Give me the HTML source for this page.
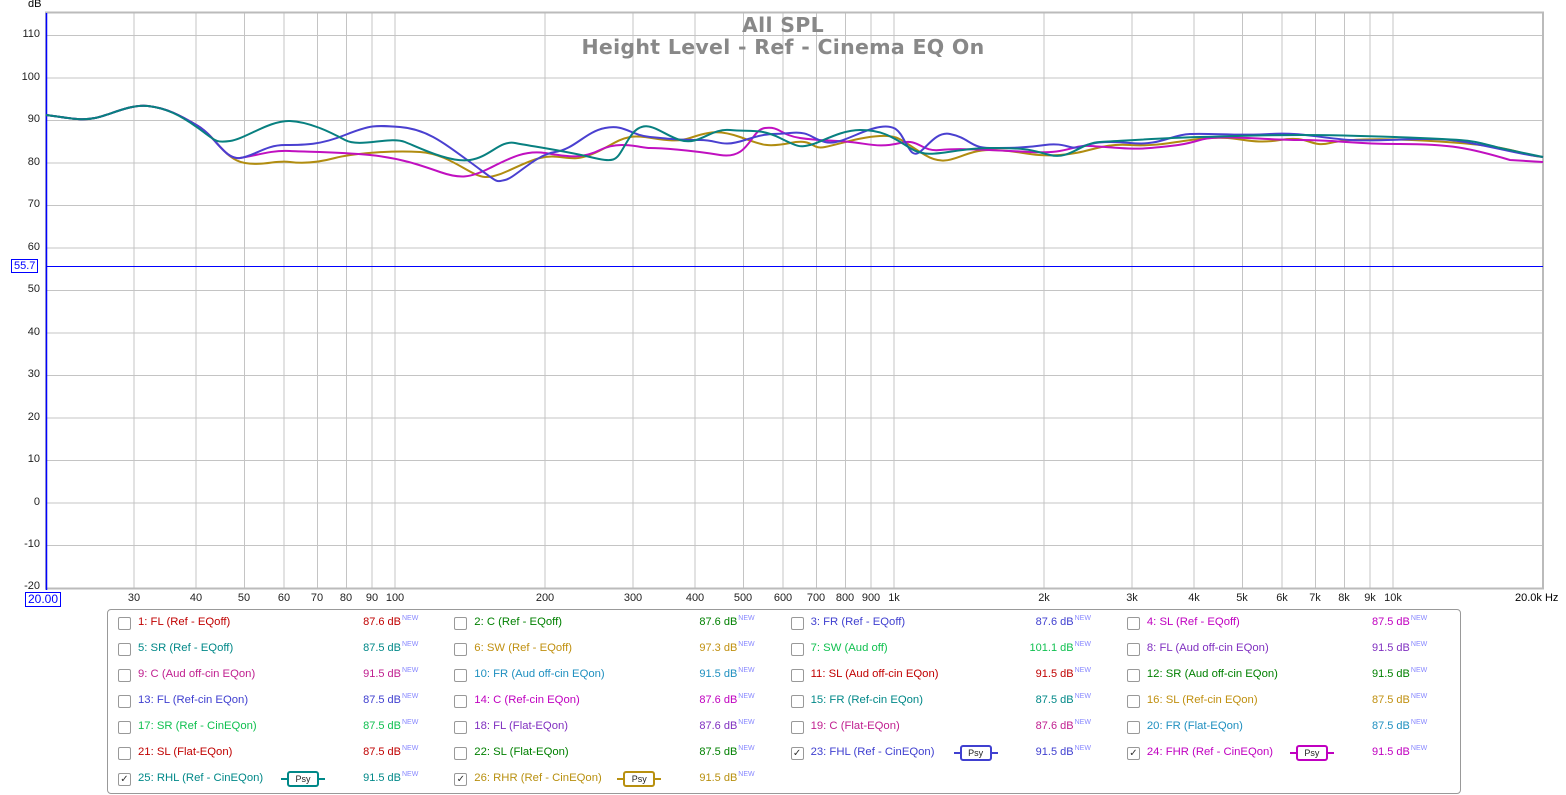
<!DOCTYPE html>
<html><head><meta charset="utf-8"><style>
body{margin:0;width:1566px;height:795px;background:#fff;font-family:"Liberation Sans",sans-serif;position:relative;overflow:hidden}
.a{position:absolute;white-space:nowrap}
.yl{font-size:11px;color:#222;text-align:right;width:40px;left:0}
.xl{font-size:11px;color:#222;transform:translateX(-50%)}
.cb{position:absolute;width:11px;height:11px;border:1px solid #999;border-radius:2px;background:#fff;font-size:10px;line-height:11px;text-align:center;color:#333}
.lb{font-size:11.3px}
.v{font-size:11px;text-align:right;width:56px}
.psy{position:absolute;font-size:9px;color:#222;border:2px solid;border-radius:3px;width:28px;height:12px;line-height:12px;text-align:center}
.psy:before,.psy:after{content:"";position:absolute;top:5px;width:6px;height:2px;background:currentColor}
.psy:before{left:-8px}.psy:after{right:-8px}
</style></head><body>
<svg class="a" style="left:0;top:0" width="1566" height="610">
<g stroke="#c4c4c4" stroke-width="1">
<line x1="46" y1="35.5" x2="1543" y2="35.5"/><line x1="46" y1="78" x2="1543" y2="78"/><line x1="46" y1="120.5" x2="1543" y2="120.5"/><line x1="46" y1="163" x2="1543" y2="163"/><line x1="46" y1="205.5" x2="1543" y2="205.5"/><line x1="46" y1="248" x2="1543" y2="248"/><line x1="46" y1="290.5" x2="1543" y2="290.5"/><line x1="46" y1="333" x2="1543" y2="333"/><line x1="46" y1="375.5" x2="1543" y2="375.5"/><line x1="46" y1="418" x2="1543" y2="418"/><line x1="46" y1="460.5" x2="1543" y2="460.5"/><line x1="46" y1="503" x2="1543" y2="503"/><line x1="46" y1="545.5" x2="1543" y2="545.5"/>
<path d="M134 13V588M196 13V588M244.5 13V588M284 13V588M317.5 13V588M346.5 13V588M372 13V588M395 13V588M545 13V588M633 13V588M695 13V588M743.5 13V588M783 13V588M816.5 13V588M845.5 13V588M871 13V588M894 13V588M1044 13V588M1132 13V588M1194 13V588M1242.5 13V588M1282 13V588M1315.5 13V588M1344.5 13V588M1370 13V588M1393 13V588"/>
</g>
<rect x="46" y="12.5" width="1497" height="576" fill="none" stroke="#bbb" stroke-width="2"/>
<line x1="46.5" y1="13" x2="46.5" y2="590" stroke="#00f" stroke-width="1.5"/>
<line x1="46" y1="266.5" x2="1543" y2="266.5" stroke="#00f" stroke-width="1"/>
<g fill="none" stroke-width="2">
<path stroke="#b08c10" d="M46,115 C70,118 80,121 95,118 S130,104 148,106 S180,115 198,126 S225,160 245,163 S275,160 290,162 S320,162 335,158 S390,150 420,152 S470,176 485,177 S520,163 540,158 S570,163 590,155 S615,140 630,137 S670,145 690,138 S720,130 740,137 S765,148 790,143 S810,150 825,147 S860,137 880,136 S900,140 925,155 S960,150 990,150 S1030,157 1060,155 S1100,143 1130,145 S1180,140 1210,138 S1250,145 1280,140 S1310,148 1330,143 S1400,138 1460,143 S1520,155 1543,157"/>
<path stroke="#c010c0" d="M46,115 C70,118 80,121 95,118 S130,104 148,106 S180,115 198,126 S225,160 240,158 S270,150 290,151 S340,152 370,155 S420,165 440,172 S470,178 490,168 S525,150 545,153 S580,160 600,150 S640,148 650,148 S690,150 720,155 S750,130 765,128 S780,135 800,138 S830,140 850,142 S880,148 900,143 S920,152 940,150 S990,150 1030,152 S1070,145 1090,146 S1130,150 1150,148 S1180,146 1200,140 S1260,140 1300,140 S1350,144 1400,144 S1470,148 1510,160 L1543,162"/>
<path stroke="#4a40d0" d="M46,115 C70,118 80,121 95,118 S130,104 148,106 S180,115 198,126 S225,160 240,158 S265,145 285,145 S320,145 345,135 S375,125 400,127 S440,140 470,162 S495,182 505,180 S535,155 555,152 S585,132 605,128 S630,135 650,137 S680,140 700,140 S720,148 745,140 S770,135 790,133 S810,138 825,142 S860,130 880,127 S900,135 910,150 S930,130 950,134 S970,148 990,148 S1025,148 1045,145 S1070,150 1080,147 S1100,140 1130,143 S1170,135 1190,134 S1240,136 1270,134 S1320,138 1350,140 S1420,137 1450,140 S1520,155 1543,157"/>
<path stroke="#088080" d="M46,115 C70,118 80,121 95,118 S130,104 148,106 S180,115 198,128 S215,143 230,141 S270,120 290,121 S330,132 345,140 S390,136 405,142 S450,163 470,160 S500,140 515,143 S560,150 590,157 S615,160 630,137 S660,134 680,140 S710,128 730,130 S760,128 780,138 S800,147 810,145 S840,130 860,130 S890,135 910,148 S950,148 990,148 S1030,150 1050,155 S1080,143 1100,142 S1160,138 1200,137 S1260,135 1300,135 S1370,136 1420,138 S1470,140 1500,148 L1543,157"/>
</g>
</svg>
<div class="a" style="left:0;top:14px;width:1566px;text-align:center;color:#888;font-size:20.5px;font-family:'DejaVu Sans',sans-serif;font-weight:bold;line-height:22px;letter-spacing:0.3px">All SPL<br>Height Level - Ref - Cinema EQ On</div>
<div class="a" style="left:28px;top:-2px;font-size:11px">dB</div>
<div class="a yl" style="top:28px">110</div><div class="a yl" style="top:71px">100</div><div class="a yl" style="top:113px">90</div><div class="a yl" style="top:156px">80</div><div class="a yl" style="top:198px">70</div><div class="a yl" style="top:241px">60</div><div class="a yl" style="top:283px">50</div><div class="a yl" style="top:326px">40</div><div class="a yl" style="top:368px">30</div><div class="a yl" style="top:411px">20</div><div class="a yl" style="top:453px">10</div><div class="a yl" style="top:496px">0</div><div class="a yl" style="top:538px">-10</div><div class="a yl" style="top:580px">-20</div>
<div class="a" style="left:11px;top:259px;border:1px solid #00f;color:#00f;font-size:11px;padding:0 2px;background:#fff">55.7</div>
<div class="a" style="left:25px;top:592px;border:1px solid #00f;color:#00f;font-size:12px;padding:0 2px;line-height:13px">20.00</div>
<div class="a xl" style="left:134px;top:592px">30</div><div class="a xl" style="left:196px;top:592px">40</div><div class="a xl" style="left:244px;top:592px">50</div><div class="a xl" style="left:284px;top:592px">60</div><div class="a xl" style="left:317px;top:592px">70</div><div class="a xl" style="left:346px;top:592px">80</div><div class="a xl" style="left:372px;top:592px">90</div><div class="a xl" style="left:395px;top:592px">100</div><div class="a xl" style="left:545px;top:592px">200</div><div class="a xl" style="left:633px;top:592px">300</div><div class="a xl" style="left:695px;top:592px">400</div><div class="a xl" style="left:743px;top:592px">500</div><div class="a xl" style="left:783px;top:592px">600</div><div class="a xl" style="left:816px;top:592px">700</div><div class="a xl" style="left:845px;top:592px">800</div><div class="a xl" style="left:871px;top:592px">900</div><div class="a xl" style="left:894px;top:592px">1k</div><div class="a xl" style="left:1044px;top:592px">2k</div><div class="a xl" style="left:1132px;top:592px">3k</div><div class="a xl" style="left:1194px;top:592px">4k</div><div class="a xl" style="left:1242px;top:592px">5k</div><div class="a xl" style="left:1282px;top:592px">6k</div><div class="a xl" style="left:1315px;top:592px">7k</div><div class="a xl" style="left:1344px;top:592px">8k</div><div class="a xl" style="left:1370px;top:592px">9k</div><div class="a xl" style="left:1393px;top:592px">10k</div>
<div class="a" style="left:1515px;top:592px;font-size:11px">20.0k Hz</div>
<div class="a" style="left:107px;top:609px;width:1352px;height:183px;border:1px solid #999;border-radius:4px"></div>
<div id="L"></div>
<script>
var d=[["1: FL (Ref - EQoff)","87.6","#c00000"],["2: C (Ref - EQoff)","87.6","#008000"],["3: FR (Ref - EQoff)","87.6","#4040d0"],["4: SL (Ref - EQoff)","87.5","#c000c0"],
["5: SR (Ref - EQoff)","87.5","#008888"],["6: SW (Ref - EQoff)","97.3","#c09010"],["7: SW (Aud off)","101.1","#10c050"],["8: FL (Aud off-cin EQon)","91.5","#8030c0"],
["9: C (Aud off-cin EQon)","91.5","#c02090"],["10: FR (Aud off-cin EQon)","91.5","#2090c0"],["11: SL (Aud off-cin EQon)","91.5","#c00000"],["12: SR (Aud off-cin EQon)","91.5","#008000"],
["13: FL (Ref-cin EQon)","87.5","#4040d0"],["14: C (Ref-cin EQon)","87.6","#c000c0"],["15: FR (Ref-cin EQon)","87.5","#008888"],["16: SL (Ref-cin EQon)","87.5","#c09010"],
["17: SR (Ref - CinEQon)","87.5","#10c050"],["18: FL (Flat-EQon)","87.6","#8030c0"],["19: C (Flat-EQon)","87.6","#c02090"],["20: FR (Flat-EQon)","87.5","#2090c0"],
["21: SL (Flat-EQon)","87.5","#c00000"],["22: SL (Flat-EQon)","87.5","#008000"],["23: FHL (Ref - CinEQon)","91.5","#4040d0",1],["24: FHR (Ref - CinEQon)","91.5","#c000c0",1],
["25: RHL (Ref - CinEQon)","91.5","#008888",1],["26: RHR (Ref - CinEQon)","91.5","#b89010",1]];
var h="";d.forEach(function(e,i){var c=i%4,r=Math.floor(i/4),x=118+c*336.3,y=617+r*26;
h+='<div class="cb" style="left:'+x+'px;top:'+y+'px">'+(e[3]?'✓':'')+'</div>';
h+='<div class="a lb" style="left:'+(x+20)+'px;top:'+(y-1)+'px;color:'+e[2]+'">'+e[0]+'</div>';
h+='<div class="a v" style="left:'+(x+227)+'px;top:'+(y-1)+'px;color:'+e[2]+'">'+e[1]+' dB</div><div class="a" style="left:'+(x+284)+'px;top:'+(y-2)+'px;font-size:7px;color:#88f">NEW</div>';
if(e[3])h+='<div class="psy" style="left:'+(x+169)+'px;top:'+(y-2)+'px;border-color:'+e[2]+';color:'+e[2]+'"><span style="color:#222">Psy</span></div>';});
document.getElementById("L").innerHTML=h;
</script>
</body></html>
